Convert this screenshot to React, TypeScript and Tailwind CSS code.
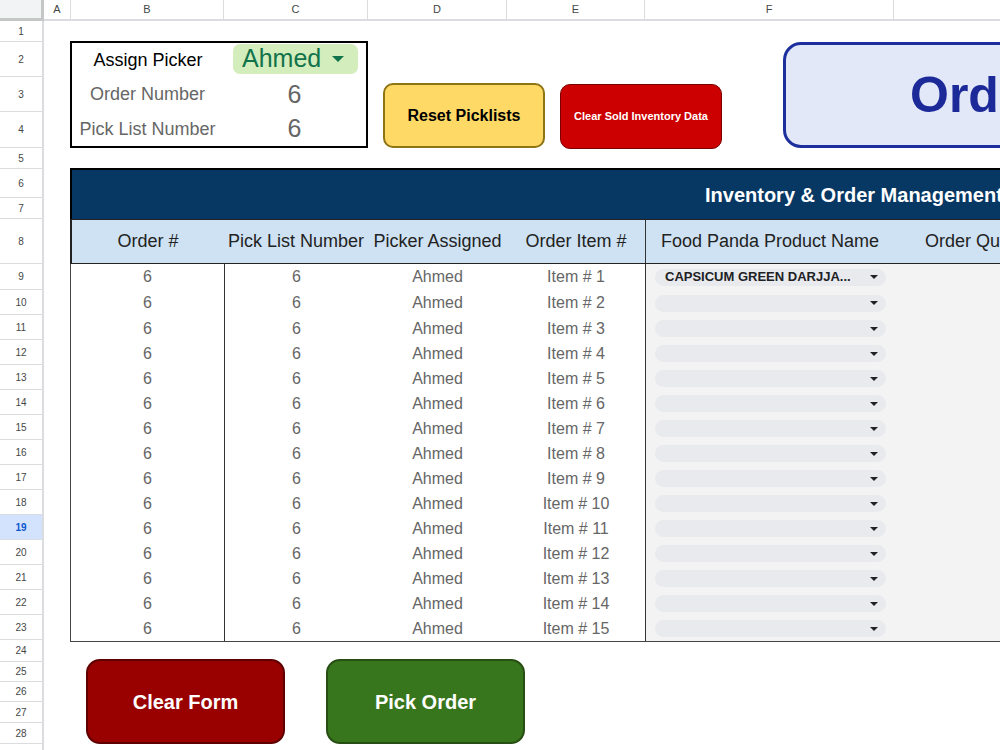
import React from "react";

const cols = [
  { l: "A", w: 27 },
  { l: "B", w: 153 },
  { l: "C", w: 144 },
  { l: "D", w: 139 },
  { l: "E", w: 138 },
  { l: "F", w: 249 },
  { l: "G", w: 250 },
];

const rowHeights = [
  21, 35, 35, 36, 21, 29, 21, 45, 26, 25, 25, 25, 25, 25, 25, 25, 25, 25, 25, 25, 25, 25, 25, 22, 20, 20, 21, 21, 25,
];

const items = Array.from({ length: 15 }, (_, i) => i + 1);

function Caret({ className }: { className?: string }) {
  return (
    <svg viewBox="0 0 10 5" className={className}>
      <path d="M0 0 L10 0 L5 5 Z" fill="currentColor" />
    </svg>
  );
}

function App() {
  return (
    <div className="h-[750px] w-[1000px] overflow-hidden bg-white font-['Liberation_Sans',Arial,sans-serif]">
      {/* column letters */}
      <div className="flex h-[21px]">
        <div className="h-[21px] w-[44px] shrink-0 border-r-[3px] border-b-[3px] border-[#c4c7c5] bg-[#f1f3f4]" />
        {cols.map((c) => (
          <div
            key={c.l}
            style={{ width: c.w }}
            className="flex h-[21px] shrink-0 items-center justify-center border-r border-b-2 border-[#dadce0] bg-white text-[11px] text-[#444746]"
          >
            {c.l}
          </div>
        ))}
      </div>

      <div className="flex">
        {/* row numbers */}
        <div className="flex w-[44px] shrink-0 flex-col">
          {rowHeights.map((h, i) => (
            <div
              key={i}
              style={{ height: h }}
              className={
                i === 18
                  ? "flex shrink-0 items-center justify-center border-r-2 border-b border-[#dadce0] bg-[#d3e3fd] text-[10px] font-bold text-[#0b57d0]"
                  : "flex shrink-0 items-center justify-center border-r-2 border-b border-[#dadce0] bg-white text-[10px] text-[#444746]"
              }
            >
              {i + 1}
            </div>
          ))}
        </div>

        {/* sheet content */}
        <div className="min-w-0 flex-1">
          <div className="flex items-end pt-[20px] pl-[26px]">
            <div className="flex h-[107px] w-[298px] shrink-0 flex-col border-2 border-black">
              <div className="flex h-[34px]">
                <div className="flex w-[152px] items-center justify-center text-[18px] text-black">Assign Picker</div>
                <div className="pt-[1px] pl-[9px]">
                  <div className="flex h-[30px] w-[125px] items-center rounded-[7px] bg-[#d4edbc] pl-[9px] text-[25px] text-[#11734b]">
                    Ahmed
                    <Caret className="ml-[10px] h-[6px] w-[14px]" />
                  </div>
                </div>
              </div>
              <div className="flex h-[35px]">
                <div className="flex w-[152px] items-center justify-center text-[18px] text-[#666666]">Order Number</div>
                <div className="flex w-[144px] items-center justify-center text-[25px] text-[#666666]">6</div>
              </div>
              <div className="flex h-[34px]">
                <div className="flex w-[152px] items-center justify-center text-[18px] text-[#666666]">Pick List Number</div>
                <div className="flex w-[144px] items-center justify-center text-[25px] text-[#666666]">6</div>
              </div>
            </div>

            <div className="ml-[15px] flex h-[65px] w-[162px] shrink-0 items-center justify-center rounded-[10px] border-2 border-[#8f7414] bg-[#ffd966] text-[16px] font-bold text-black">
              Reset Picklists
            </div>
            <div className="mb-[-1px] ml-[15px] flex h-[65px] w-[162px] shrink-0 items-center justify-center rounded-[10px] border border-[#7a0000] bg-[#cc0000] text-[11px] font-bold text-white">
              Clear Sold Inventory Data
            </div>
            <div className="ml-[61px] flex h-[106px] w-[420px] shrink-0 items-center rounded-[18px] border-[3px] border-[#1c2f9c] bg-[#e3e8f8] pl-[124px] text-[50px] font-bold text-[#1c2a99]">
              Order Form
            </div>
          </div>

          {/* table */}
          <div className="mt-[20px] ml-[26px] w-[1100px]">
            <div className="flex h-[51px] items-center border-t-2 border-l-2 border-black bg-[#073763] pl-[633px] text-[20px] font-bold whitespace-nowrap text-white">
              Inventory &amp; Order Management System
            </div>
            <div className="flex h-[45px] border-t border-b border-l-2 border-[#222] bg-[#cfe2f3] text-[18px] whitespace-nowrap text-[#222]">
              <div className="flex w-[152px] items-center justify-center">Order #</div>
              <div className="flex w-[144px] items-center justify-center">Pick List Number</div>
              <div className="flex w-[139px] items-center justify-center">Picker Assigned</div>
              <div className="flex w-[138px] items-center justify-center">Order Item #</div>
              <div className="flex w-[249px] items-center justify-center border-l border-[#333]">Food Panda Product Name</div>
              <div className="flex w-[250px] items-center pl-[31px]">Order Quantity</div>
            </div>
            <div className="border-b border-l border-[#444]">
              {items.map((n) => (
                <div key={n} className={n < 3 ? "flex h-[26px] text-[16px] text-[#666666]" : "flex h-[25px] text-[16px] text-[#666666]"}>
                  <div className="flex w-[153px] items-center justify-center">6</div>
                  <div className="flex w-[144px] items-center justify-center border-l border-[#333]">6</div>
                  <div className="flex w-[139px] items-center justify-center">Ahmed</div>
                  <div className="flex w-[138px] items-center justify-center">Item # {n}</div>
                  <div className="flex flex-1 items-center border-l border-[#333] bg-[#f3f3f3] pl-[9px]">
                    <div className="flex h-[17px] w-[231px] items-center rounded-full bg-[#e8eaed] pr-[8px] pl-[10px] text-[13px] font-bold text-[#202124]">
                      <span className="flex-1 whitespace-nowrap">{n === 1 ? "CAPSICUM GREEN DARJJA..." : ""}</span>
                      <Caret className="h-[4px] w-[8px] text-[#202124]" />
                    </div>
                  </div>
                </div>
              ))}
            </div>
          </div>

          <div className="mt-[17px] ml-[42px] flex gap-[41px]">
            <div className="flex h-[85px] w-[199px] items-center justify-center rounded-[14px] border-2 border-[#5e0000] bg-[#990000] text-[20px] font-bold text-white">
              Clear Form
            </div>
            <div className="flex h-[85px] w-[199px] items-center justify-center rounded-[14px] border-2 border-[#274e13] bg-[#38761d] text-[20px] font-bold text-white">
              Pick Order
            </div>
          </div>
        </div>
      </div>
    </div>
  );
}

export default App;
